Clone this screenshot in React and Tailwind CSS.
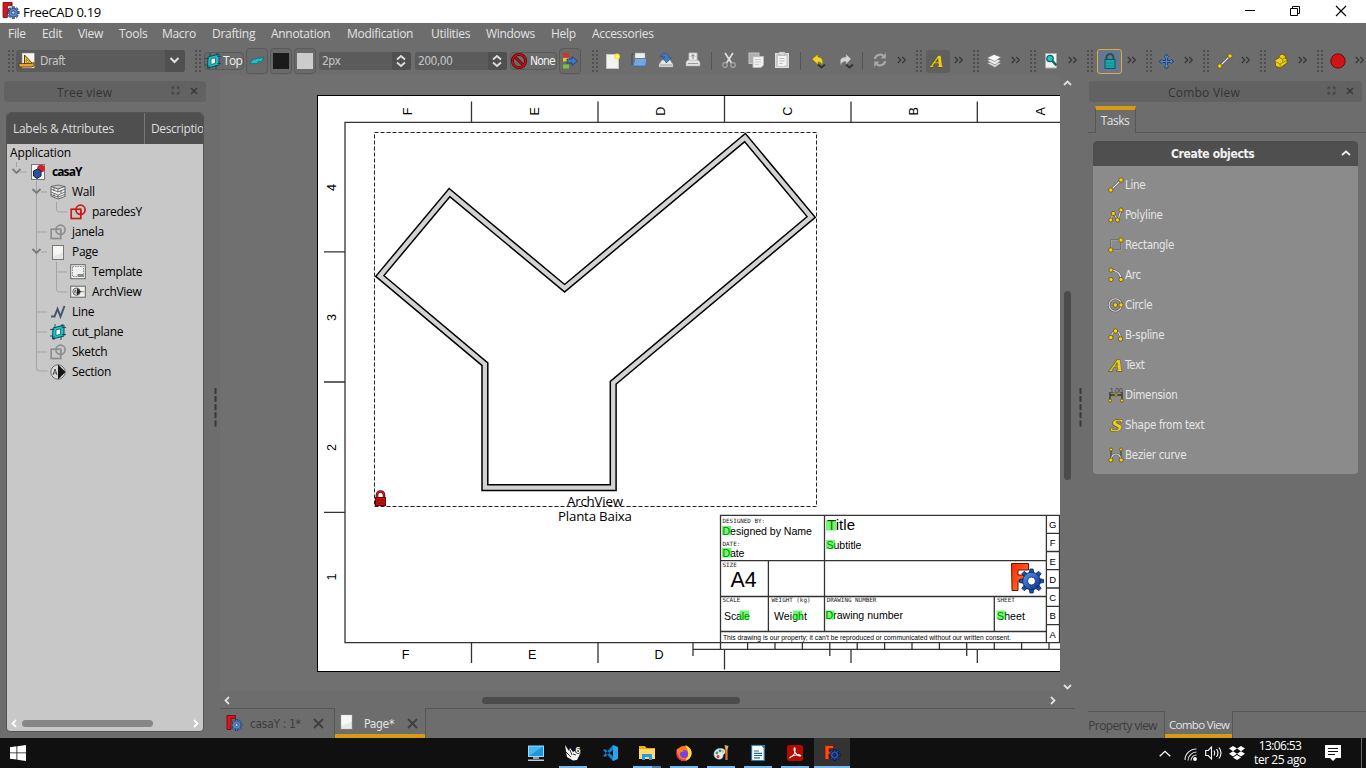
import React from "react";

const ui = "font-['Open_Sans','Noto_Sans',sans-serif]";
const tah = "font-['DejaVu_Sans_Condensed','DejaVu_Sans',sans-serif] [font-stretch:condensed]";

function Svg({ w = 16, h = 16, vb, className = "", children }) {
  return (
    <svg width={w} height={h} viewBox={vb || "0 0 16 16"} className={"block shrink-0 overflow-visible " + className} fill="none">
      {children}
    </svg>
  );
}

const teeth = [0, 45, 90, 135, 180, 225, 270, 315];

function Logo({ size = 16, dark = false, className = "" }) {
  const outline = dark ? "#07113a" : "#1d3c6e";
  return (
    <Svg w={size} h={size} vb="0 0 32 32" className={className}>
      <path d="M2 1h17v6H10v6h7v6h-7v10H2z" fill={dark ? "#ff4a12" : "#dd1518"} stroke={dark ? "#7a1500" : "#6d0708"} strokeWidth="1.6" />
      <g fill={dark ? "#2456b8" : "#5183c4"} stroke={outline} strokeWidth="1.4">
        {teeth.map((a) => (
          <rect key={a} x="18.9" y="9" width="4.600" height="6" transform={`rotate(${a} 21.200 20)`} />
        ))}
        <circle cx="21.200" cy="20" r="7.500" />
      </g>
      <circle cx="21.200" cy="20" r="7" fill={dark ? "#2456b8" : "#5a8acb"} />
      <circle cx="21.200" cy="20" r="3.200" fill={dark ? "#333" : "#c5d3e6"} stroke={outline} strokeWidth="1.4" />
    </Svg>
  );
}

function Dot({ x, y, r = 2 }) {
  return <circle cx={x} cy={y} r={r} fill="#f3d01c" stroke="#665500" strokeWidth="0.8" />;
}

function Plane() {
  return (
    <Svg>
      <path d="M3 4 14 1v11L2.500 15z" fill="#20bfc4" stroke="#0b4d55" />
      <path d="m6 6 4.500-1.200v5.500L6 11.500z" fill="#f2ffff" stroke="#0b5d64" strokeWidth=".8" />
      <path d="M0 5.500h4M0 12h3M12 3.500h4M12 10.500h4M5 0v4M12 0v3M4 12v4M11 12v4" stroke="#0b4d55" strokeWidth=".9" />
    </Svg>
  );
}

function PageIcon({ w = 12, h = 15 }) {
  return (
    <Svg w={w} h={h} vb="0 0 12 15">
      <rect x=".5" y=".5" width="11" height="14" fill="#e6e8e3" stroke="#777a75" />
      <path d="M1.200 1.200h9.600v6l-9.600 4z" fill="#f7f7f5" />
    </Svg>
  );
}

function Sketch({ color }) {
  return (
    <Svg>
      <rect x="1.200" y="5.200" width="9.600" height="9.300" stroke={color} strokeWidth="1.700" />
      <circle cx="10.500" cy="5.800" r="4.600" stroke={color} strokeWidth="1.700" />
      <path d="M6.500 5.500h4.500v4" stroke={color} strokeWidth="1" />
    </Svg>
  );
}

function LetterIcon({ ch, k = 1.15 }) {
  return (
    <Svg>
      <text transform={`translate(8 13.500) skewX(-6) scale(${k} 1)`} textAnchor="middle" fontFamily="Liberation Serif, serif" fontStyle="italic" fontWeight="bold" fontSize="17" fill="#ecd024" stroke="#5b4f08" strokeWidth=".9" paintOrder="stroke">{ch}</text>
    </Svg>
  );
}

function LineIcon() {
  return (
    <Svg>
      <path d="M3 13 13 3" stroke="#444" strokeWidth="2.400" />
      <path d="M3 13 13 3" stroke="#eee" strokeWidth="1.200" />
      <Dot x={2.800} y={13} r={2.200} /><Dot x={13} y={3} r={2.200} />
    </Svg>
  );
}

function Handle({ className }) {
  return (
    <Svg w={6} h={22} vb="0 0 6 22" className={className}>
      <path d="M1 0v22M5 0v22" stroke="#505050" strokeWidth="2" strokeDasharray="2 2" />
    </Svg>
  );
}

function More({ className = "ml-1" }) {
  return (
    <Svg w={9} h={8} vb="0 0 9 8" className={"mb-[2px] " + className}>
      <path d="m.8 1 3 3-3 3M5.300 1l3 3-3 3" stroke="#353535" strokeWidth="1.200" />
    </Svg>
  );
}

function Sep({ className }) {
  return <div className={"h-[18px] w-px shrink-0 bg-[#555] " + className} />;
}

function Btn({ className = "", children }) {
  return (
    <div className={"flex h-[26px] w-[22px] shrink-0 items-center justify-center rounded-[4px] border border-[#595959] bg-[#6a6a6a] " + className}>
      {children}
    </div>
  );
}

function Spin({ value, className }) {
  return (
    <div className={"flex h-[18px] w-[92px] shrink-0 items-center overflow-hidden rounded-[3px] bg-[#5b5b5b] " + className}>
      <span className={"w-[73px] pl-[3px] text-[12px] leading-[18px] tracking-[-0.6px] text-[#c6c6c6] " + tah}>{value}</span>
      <span className="flex h-full w-[19px] items-center justify-center bg-[#505050]">
        <Svg w={10} h={12} vb="0 0 10 12" className="-ml-px"><path d="m1 4.500 4-3.500 4 3.500M1 7.500l4 3.500 4-3.500" stroke="#ddd" strokeWidth="1.800" /></Svg>
      </span>
    </div>
  );
}

function TitleBar() {
  return (
    <div className="flex h-[23px] items-center bg-white">
      <Logo size={17} className="ml-[2px] mb-[2px]" />
      <span className={"ml-[4px] w-[1221px] text-[13px] leading-[22px] tracking-[-0.3px] text-black " + ui}>FreeCAD 0.19</span>
      <Svg w={12} h={12} vb="0 0 12 12" className="mb-[3px]"><path d="M1 6.500h10" stroke="#000" /></Svg>
      <Svg w={12} h={12} vb="0 0 12 12" className="mb-[2px] ml-[33px]"><path d="M1.500 3.500h7v7h-7zM3.500 3V1.500h7v7H9" stroke="#000" /></Svg>
      <Svg w={12} h={12} vb="0 0 12 12" className="mb-[2px] ml-[34px]"><path d="m1 1 10 10M11 1 1 11" stroke="#000" strokeWidth="1.100" /></Svg>
    </div>
  );
}

const menus = [
  ["File", "w-[34px]"], ["Edit", "w-[36px]"], ["View", "w-[41px]"], ["Tools", "w-[43px]"],
  ["Macro", "w-[50px]"], ["Drafting", "w-[59px]"], ["Annotation", "w-[76px]"], ["Modification", "w-[84px]"],
  ["Utilities", "w-[55px]"], ["Windows", "w-[65px]"], ["Help", "w-[41px]"], ["Accessories", "w-[80px]"],
];

function MenuBar() {
  return (
    <div className={"flex h-[22px] items-center pl-[8px] text-[12px] tracking-[-0.3px] text-[#e2e2e2] " + ui}>
      {menus.map(([m, w]) => <span key={m} className={"shrink-0 whitespace-nowrap " + w}>{m}</span>)}
    </div>
  );
}

function Slot({ w = "w-[24px]", className = "", children }) {
  return <div className={"ml-1 flex shrink-0 items-center justify-center " + w + " " + className}>{children}</div>;
}

const movePath = "M8 1v14M1 8h14M6 3 8 1l2 2M6 13l2 2 2-2M3 6 1 8l2 2M13 6l2 2-2 2";

function ToolBar() {
  return (
    <div className="flex h-[30px] items-center overflow-hidden pt-[2px]">
      <Handle className="ml-[8px]" />
      <div className="ml-[2px] flex h-[22px] w-[169px] shrink-0 items-center overflow-hidden rounded-[3px] bg-[#5b5b5b]">
        <Svg className="ml-[3px]">
          <rect x="3" y="0" width="12.500" height="15" fill="#f5f5f2" stroke="#888" strokeWidth=".6" />
          <path d="M5.500 2v9h8.500z" fill="#e7c51b" stroke="#544600" /><path d="M7.500 6.500v2.700h2.700z" fill="#fff" stroke="#544600" strokeWidth=".5" />
          <path d="M0 10.500h12l3-1v3.500l-3 1H0z" fill="#e9a03a" stroke="#5d3500" strokeWidth=".8" />
        </Svg>
        <span className={"ml-[5px] w-[125px] text-[12px] tracking-[-0.4px] text-[#c6c6c6] " + tah}>Draft</span>
        <span className="flex h-full flex-1 items-center justify-center bg-[#505050]">
          <Svg w={11} h={7} vb="0 0 11 7" className="-ml-[2px] -mt-[2px]"><path d="m1.500 1 4 4 4-4" stroke="#e2e2e2" strokeWidth="2" /></Svg>
        </span>
      </div>
      <Handle className="ml-[10px]" />
      <div className="ml-[3px] flex h-[18px] w-[40px] shrink-0 items-center rounded-[4px] border border-[#595959] bg-[#6a6a6a]">
        <Plane /><span className={"ml-[2px] text-[12px] tracking-[-0.700px] text-[#f0f0f0] " + ui}>Top</span>
      </div>
      <Btn className="ml-[2px]"><Svg><path d="M1 10.500c2-3.500 3-4.500 6-4.500l1-1 3 .3L15 4l-2 4.500-2 .5-1-1-2 2.500c-2 0-4 .5-7 0z" fill="#20bfc4" stroke="#0c6c72" strokeWidth=".8" /></Svg></Btn>
      <Btn className="ml-[2px]"><div className="h-4 w-4 bg-[#1a1a1a]" /></Btn>
      <Btn className="ml-[2px]"><div className="h-4 w-4 bg-[#ccc]" /></Btn>
      <Spin value="2px" className="ml-[3px]" />
      <Spin value="200,00" className="ml-[4px]" />
      <div className="ml-[3px] flex h-[18px] w-[47px] shrink-0 items-center rounded-[4px] border border-[#595959] bg-[#6a6a6a]">
        <Svg><circle cx="8" cy="8" r="6.600" stroke="#4a0000" strokeWidth="2.800" /><path d="m4 4 8 8" stroke="#4a0000" strokeWidth="2.800" /><circle cx="8" cy="8" r="6.600" stroke="#c40f0f" strokeWidth="1.600" /><path d="m4 4 8 8" stroke="#c40f0f" strokeWidth="1.600" /></Svg>
        <span className={"ml-[3px] text-[12px] tracking-[-0.800px] text-[#f0f0f0] " + tah}>None</span>
      </div>
      <Btn className="ml-[2px]">
        <Svg><rect x="1" y="0" width="6" height="4" fill="#e02c22" /><rect x="1" y="5" width="6" height="3.500" fill="#e8c81d" /><rect x="1" y="11.500" width="6" height="4" fill="#79c43c" /><path d="M5 6h5V3.500L15.500 8 10 12.500V10H5z" fill="#3f78bf" stroke="#183c6c" strokeWidth=".8" /></Svg>
      </Btn>
      <Handle className="ml-[11px]" />
      <Svg className="ml-[7px]"><rect x="1.500" y="1.500" width="12" height="14" fill="#f2f2f0" stroke="#c5c5c2" /><circle cx="12" cy="3.500" r="2.900" fill="#f6ec2c" /><circle cx="12" cy="3.500" r="1.300" fill="#fffdb0" /></Svg>
      <Svg className="-mt-[2px] ml-[10px]"><path d="M1 13V2h5l1 1.500h6V7" fill="#6f7275" stroke="#484b4e" /><path d="M4 1h10v8H4z" fill="#eee" stroke="#aaa" strokeWidth=".6" /><path d="M4 6.500h12l-1.500 7.500H2z" fill="#76a7dc" stroke="#3e6ea8" strokeWidth=".8" /></Svg>
      <Svg className="-mt-[2px] ml-[11px]"><path d="M4 8h8l3 4.500V15H1v-2.500z" fill="#e6e6e6" stroke="#999" strokeWidth=".6" /><path d="M2 13h12" stroke="#999" /><path d="M2 5C3 2 5 1 8 1.500c2 .5 2.500 2 2.500 4H13L8.500 11 4.500 5.500H7C7 4 5 3.500 2 5z" fill="#3f7cc8" stroke="#224d87" strokeWidth=".6" /></Svg>
      <Svg className="-mt-[2px] ml-[11px]"><path d="M4 1h8v8H4z" fill="#eee" stroke="#bbb" /><path d="M8 3v4M6 4.500 8 2.500l2 2" stroke="#777" /><path d="M3 8h10l2 2v4H1v-4z" fill="#e2e2e2" stroke="#aaa" strokeWidth=".6" /><path d="M3 11.500h10" stroke="#999" /></Svg>
      <Sep className="ml-[10px]" />
      <Svg className="-mt-[2px] ml-[9px]"><path d="m4 1 6.500 10M12 1 5.500 11" stroke="#ddd" strokeWidth="1.700" /><circle cx="4" cy="13" r="2.300" stroke="#a7a7a7" strokeWidth="1.200" /><circle cx="12" cy="13" r="2.300" stroke="#a7a7a7" strokeWidth="1.200" /></Svg>
      <Svg className="-mt-[2px] ml-[11px]"><rect x="1" y="1" width="10" height="10.500" fill="#aeaeae" stroke="#c5c5c5" /><path d="M5 4.500h10.500V13l-2.500 2.500H5z" fill="#f0f0ee" stroke="#bbb" /><path d="M7 7.500h6M7 10h6M7 12.500h4" stroke="#ccc" /></Svg>
      <Svg className="-mt-[2px] ml-[10px]"><rect x="1.500" y="1.500" width="13" height="14" fill="#c8c8c5" stroke="#ddd" /><path d="M4 4h8.500v9l-2 1H4z" fill="#f3f3f1" /><rect x="5" y="0" width="6" height="3" fill="#ddd" stroke="#999" strokeWidth=".5" /><path d="M5.500 6.500h5M5.500 9h5M5.500 11.500h3" stroke="#bbb" /></Svg>
      <Sep className="ml-[10px]" />
      <Svg className="ml-[10px]"><path d="m1 6 6-5v3c4 0 6 3.500 4 9-.5-3-1.500-4-4-4v3z" fill="#f0d42a" stroke="#857000" strokeWidth=".7" /><path d="m7 11.500 3.500 3 3.500-3" stroke="#333" strokeWidth="1.900" /></Svg>
      <Svg className="ml-[11px]"><path d="M13 6 8 1v3C3 4 1 7 3 12c.5-2.500 2-3.500 5-3.500v3z" fill="#d4d4d4" stroke="#888" strokeWidth=".7" /><path d="m8 11.500 3.500 3 3.500-3" stroke="#333" strokeWidth="1.900" /></Svg>
      <Sep className="ml-[8px]" />
      <Svg className="-mt-[2px] ml-[9px]"><path d="M3 7c0-4 6-6 9-2.500M13 9c0 4-6 6-9 2.500" stroke="#a8a8a8" strokeWidth="2.200" /><path d="M13.800 1v5.500H8.500zM2.200 15V9.500h5.300z" fill="#a8a8a8" /></Svg>
      <More className="ml-[9px]" />
      <Handle className="ml-[10px]" />
      <Slot className="h-[23px] rounded-[3px] bg-[#5f5f5f] pr-[2px]"><LetterIcon ch="A" /></Slot>
      <More />
      <Handle className="ml-[10px]" />
      <Slot className="pr-[2px]"><Svg w={14} h={14}><path d="m0 10.500 8-3 8 3-7 5z" fill="#ddd" stroke="#777" strokeWidth=".8" /><path d="m0 7.500 8-3 8 3-7 5z" fill="#eee" stroke="#777" strokeWidth=".8" /><path d="m0 4.500 8-4 8 3-7 5z" fill="#fff" stroke="#777" strokeWidth=".8" /></Svg></Slot>
      <More />
      <Handle className="ml-[10px]" />
      <Slot className="pr-[2px]"><Svg><path d="M2.500 .500h11v14.500h-11z" fill="#f2f2f0" stroke="#aaa" /><circle cx="7" cy="5.500" r="3.200" fill="#25c5c8" stroke="#0f666c" strokeWidth="1.300" /><path d="m9.500 8 4 4.500" stroke="#0f666c" strokeWidth="2.600" /></Svg></Slot>
      <More />
      <Handle className="ml-[10px]" />
      <Slot w="w-[25px]" className="h-[25px] rounded-[3px] border border-[#e0aa3e] bg-[#69778f]"><Svg><path d="M4.500 8V4.500a3.500 3.500 0 0 1 7 0V8" stroke="#16575d" strokeWidth="2" /><rect x="3" y="6.500" width="10" height="9" fill="#18a9ac" stroke="#0e5459" /><path d="M4 10h8M4 13h8" stroke="#118588" strokeWidth=".8" /></Svg></Slot>
      <More className="ml-[5px]" />
      <Handle className="ml-[10px]" />
      <Slot className="pr-[3px]"><Svg w={13} h={13}><path d={movePath} stroke="#1d3f70" strokeWidth="3.400" /><path d={movePath} stroke="#5287c6" strokeWidth="1.500" /></Svg></Slot>
      <More />
      <Handle className="ml-[10px]" />
      <Slot className="pr-[1px]"><LineIcon /></Slot>
      <More />
      <Handle className="ml-[10px]" />
      <Slot className="pr-[3px]"><Svg w={14} h={14}><path d="m1 7 5-3V2l3-2 4 2v3l2 1v4L7 16l-5-2z" fill="#ecd018" stroke="#675700" /><path d="m2 9 5 2.500L15 7M7 11.500V15M6 4l4 2 4-3M10 6v3" stroke="#847000" strokeWidth=".9" /></Svg></Slot>
      <More />
      <Handle className="ml-[10px]" />
      <Slot className="pr-[2px]"><Svg><circle cx="8" cy="8" r="7.200" fill="#d01414" stroke="#5d0808" strokeWidth=".9" /></Svg></Slot>
      <More />
    </div>
  );
}

function DockTitle({ title, className, pad }) {
  return (
    <div className={"flex h-[21px] shrink-0 items-center rounded-[3px] bg-[#626262] " + className}>
      <span className={"whitespace-nowrap pt-px text-[12px] leading-[21px] tracking-[0.22px] text-[#343434] " + pad + " " + ui}>{title}</span>
      <Svg w={9} h={9} vb="0 0 9 9" className="mb-[2px] ml-auto"><path d="M3.500 1H1v2.500M5.500 1H8v2.500M3.500 8H1V5.500M5.500 8H8V5.500M1 1l2 2M8 1 6 3M1 8l2-2M8 8 6 6" stroke="#3f3f3f" strokeWidth=".9" /></Svg>
      <Svg w={8} h={8} vb="0 0 8 8" className="mb-[2px] ml-[10px] mr-[8px]"><path d="m1 1 6 6M7 1 1 7" stroke="#3a3a3a" strokeWidth="1.700" /></Svg>
    </div>
  );
}

const tree = [
  { t: "Wall", p: "pl-[43px]", i: <Svg><path d="M1 2.500 8 5l7-2.500v10L8 15l-7-3z" fill="#f0f0f0" stroke="#555" strokeWidth=".9" /><path d="m1 5 7 3 7-3M1 8l7 3 7-3M1 10.500l7 2.500 7-2.500M4 4v3M11 6v3M4 9.500v3M8 5v3M8 11v3M1 2.500 8 1l7 1.500" stroke="#555" strokeWidth=".8" /></Svg> },
  { t: "paredesY", p: "pl-[63px]", i: <Sketch color="#cc1818" /> },
  { t: "janela", p: "pl-[43px]", i: <Sketch color="#8e8e8e" /> },
  { t: "Page", p: "pl-[43px]", i: <div className="flex w-4 justify-center"><PageIcon /></div> },
  { t: "Template", p: "pl-[63px]", i: <Svg><rect x=".7" y=".7" width="14.600" height="14" fill="#f1f1ee" stroke="#666" /><path d="M2.500 2.500h11v10h-11z" stroke="#8b8b8b" strokeDasharray="1.500 1" /><path d="M7.500 10h6v3h-6z" fill="#888" /></Svg> },
  { t: "ArchView", p: "pl-[63px]", i: <Svg><rect x=".7" y="2.200" width="14.600" height="11" fill="#f1f1ee" stroke="#666" /><circle cx="6.500" cy="7.700" r="3.700" fill="#ccc" stroke="#555" strokeWidth=".8" /><path d="M7 4v7.500L11 7.700z" fill="#222" /><path d="m4 9.500 1.300-3.500 1.200 3.500M11 7.700h3" stroke="#666" strokeWidth=".8" /></Svg> },
  { t: "Line", p: "pl-[43px]", i: <Svg><path d="M1 12.500h3.500L7.500 5l3 7.500L14.500 2" stroke="#46566d" strokeWidth="2" /></Svg> },
  { t: "cut_plane", p: "pl-[43px]", i: <Plane /> },
  { t: "Sketch", p: "pl-[43px]", i: <Sketch color="#8e8e8e" /> },
  { t: "Section", p: "pl-[43px]", i: <Svg><circle cx="8" cy="8" r="7.200" fill="#d9d9d9" stroke="#555" strokeWidth=".8" /><path d="M8 .5v15L15.500 8z" fill="#151515" /><path d="m3 11 2-6 2 6M3.500 9h3" stroke="#444" strokeWidth=".9" /></Svg> },
];

function Splitter({ className = "" }) {
  return (
    <Svg w={3} h={39} vb="0 0 3 39" className={className}><path d="M1.500 0v39" stroke="#383838" strokeWidth="2" strokeDasharray="6 2.100" /></Svg>
  );
}

function LeftDock() {
  return (
    <div className="flex w-[220px] shrink-0">
      <div className="flex w-[206px] shrink-0 flex-col pt-[6px]">
        <DockTitle title="Tree view" className="ml-[4px]" pad="pl-[53px]" />
        <div className="ml-[6px] mt-[10px] flex h-[620px] w-[198px] flex-col overflow-hidden rounded-[4px] border border-[#535353] bg-[#c8c8c8]">
          <div className={"flex h-[31px] shrink-0 items-center bg-[#4f4f4f] text-[12px] tracking-[-0.28px] text-[#dcdcdc] " + ui}>
            <span className="w-[137px] shrink-0 whitespace-nowrap pl-[6px]">Labels &amp; Attributes</span>
            <span className="h-full w-px shrink-0 bg-[#777]" />
            <span className="whitespace-nowrap pl-[6px] tracking-[-0.4px]">Descriptio</span>
          </div>
          <div className={"relative flex flex-1 flex-col text-[12px] tracking-[-0.28px] text-black " + ui}>
            <svg width="196" height="260" viewBox="0 0 196 260" className="absolute left-0 top-0" fill="none">
              <path d="M9.500 18v5M13 28h7M29.500 37v187q0 3 3 3h8M34 48h6M30 88h10M34 108h6M49.500 58v7q0 3 3 3h8M49.500 118v27q0 3 3 3h8M50 128h10M30 168h10M30 188h10M30 208h10" stroke="#a3a3a3" />
              <path d="m5.500 25 4 4 4-4M25.500 45l4 4 4-4M25.500 105l4 4 4-4" stroke="#7b7b7b" strokeWidth="1.900" />
            </svg>
            <div className="flex h-[18px] items-center pl-[3px] tracking-[-0.15px]">Application</div>
            <div className="flex h-[20px] items-center pl-[23px] font-bold">
              <Svg><rect x="1.500" y=".500" width="13" height="15" fill="#f4f4f2" stroke="#777" /><circle cx="11" cy="4.500" r="3.800" fill="#d81f1f" /><path d="m3.500 7 4-2 3.500 2v5l-4 2.500L3.500 12z" fill="#27539c" stroke="#10254d" /></Svg>
              <span className="ml-[6px] tracking-[-0.9px]">casaY</span>
            </div>
            {tree.map((r) => (
              <div key={r.t} className={"flex h-[20px] shrink-0 items-center " + r.p}>{r.i}<span className="ml-[6px]">{r.t}</span></div>
            ))}
            <div className="mt-auto flex h-[16px] items-center">
              <Svg w={6} h={9} vb="0 0 6 9" className="ml-[4px]"><path d="M5 1 1.500 4.500 5 8" stroke="#fff" strokeWidth="1.800" /></Svg>
              <div className="ml-[5px] h-[7px] w-[131px] rounded-full bg-[#868686]" />
              <Svg w={6} h={9} vb="0 0 6 9" className="ml-[40px]"><path d="M1 1l3.500 3.500L1 8" stroke="#fff" strokeWidth="1.800" /></Svg>
            </div>
          </div>
        </div>
      </div>
      <Splitter className="ml-[8px] mt-[313px]" />
    </div>
  );
}

const rulerTicks = [720.5, 747.6, 775, 802.4, 829.8, 857.2, 884.6, 912, 939.4, 966.7, 994.3, 1021.6, 1049];
const sideCells = [["G", 528.3], ["F", 546.4], ["E", 564.6], ["D", 582.8], ["C", 601.2], ["B", 619.4], ["A", 637.7]];
const wall = "M379.800 276 449.500 192.600 564.600 288.200 745 137.600 811.200 217 613.200 382.800V487.700H484.900V364.200z";
const marks = [[722, 526, 9], [722, 548, 9.5], [826, 520.5, 10], [826, 540, 9], [739.5, 610.5, 9.5], [793, 610.5, 9.5], [825.5, 610.5, 9], [996.5, 610.5, 9]];

function Drawing() {
  return (
    <svg width="840" height="616" viewBox="220 75 840 616" className="block" fill="none">
      <rect x="317.500" y="95.500" width="800" height="576" fill="#fff" stroke="#000" />
      <g stroke="#333" strokeWidth="1.300">
        <path d="M1060 122.400H345V642.700H1060" />
        <path d="M471.500 101.500v21M598 101.500v21M724.500 96v26M851 101.500v21M977.300 101.500v21M471.500 643v20M598 643v20M724.500 650v19.500M851 649v14M977.300 649v14" />
        <path d="M324 251.800h21M324 382h21M324 512.300h21" />
        <path d="M693 649.400h367M693 643v13M829.800 649v7M966.700 649v7" />
        {rulerTicks.map((x) => <path key={x} d={`M${x} 643v6.500`} />)}
      </g>
      <g fontFamily="Liberation Sans, Arial, sans-serif" fontSize="12.600" fill="#000" textAnchor="middle">
        {[["F", 407.5], ["E", 534.5], ["D", 660.8], ["C", 787.5], ["B", 914], ["A", 1040.5]].map(([c, x]) => (
          <text key={c} transform={`translate(${x + 4} 111.300) rotate(-90)`}>{c}</text>
        ))}
        {[["4", 187.5], ["3", 317.5], ["2", 447.5], ["1", 577]].map(([c, y]) => (
          <text key={c} transform={`translate(335.500 ${y}) rotate(-90)`}>{c}</text>
        ))}
        <text x="405.500" y="659">F</text><text x="532.300" y="659">E</text><text x="659" y="659">D</text>
      </g>
      <path d="M374.500 132.500H816.500V506.500H374.500z" stroke="#222" strokeDasharray="4 2" />
      <path d={wall} stroke="#000" strokeWidth="7.300" strokeMiterlimit="6" />
      <path d={wall} stroke="#d3d3d3" strokeWidth="4.300" strokeMiterlimit="6" />
      <path d="M377 498v-3a3.500 3.500 0 0 1 7 0v3" stroke="#4d0505" strokeWidth="2.600" />
      <path d="M377 498v-3a3.500 3.500 0 0 1 7 0v3" stroke="#e41e1e" strokeWidth="1.200" />
      <rect x="375.500" y="497.500" width="10" height="8" fill="#c51111" stroke="#5c0606" /><path d="M376.500 500h8M376.500 503h8" stroke="#8c0b0b" />
      <g fontFamily="Open Sans, Noto Sans, sans-serif" fontSize="13.300" fill="#000">
        <text x="567" y="505.700" textLength="56">ArchView</text>
        <text x="558" y="520.700" textLength="74">Planta Baixa</text>
      </g>
      <g stroke="#333" strokeWidth="1.300">
        <path d="M720.500 643V515.400H1059.500V643M720.500 560.600H1046.400M720.500 596.500H1046.400M720.500 631.500H1046.400M824.500 515.400V631.500M768.400 560.600V631.500M994.300 596.500V631.500M1046.400 515.400V643M1046.400 533.400h13M1046.400 551.500h13M1046.400 569.700h13M1046.400 588h13M1046.400 606.400h13M1046.400 624.600h13" />
      </g>
      <g fontFamily="Liberation Sans, Arial, sans-serif" fill="#000" fontSize="10.600">
        <g textAnchor="middle" fontSize="9.500">{sideCells.map(([c, y]) => <text key={c} x="1052.600" y={y}>{c}</text>)}</g>
        <text x="722.500" y="535.300" textLength="89.500">Designed by Name</text>
        <text x="722.500" y="557" textLength="22">Date</text>
        <text x="827" y="530.300" fontSize="15" textLength="28">Title</text>
        <text x="826.500" y="549" textLength="35">Subtitle</text>
        <text x="730.500" y="587" fontSize="21.300" textLength="26">A4</text>
        <text x="724" y="619.500" textLength="26">Scale</text>
        <text x="774" y="619.500" textLength="33">Weight</text>
        <text x="825.500" y="619.300" textLength="77.500">Drawing number</text>
        <text x="997" y="619.500" textLength="28">Sheet</text>
        <text x="723" y="640" fontSize="6.500" textLength="288" lengthAdjust="spacingAndGlyphs">This drawing is our property; it can't be reproduced or communicated without our written consent.</text>
      </g>
      <g fontFamily="DejaVu Sans Mono, monospace" fill="#222" fontSize="5.900">
        <text x="722.500" y="522.700">DESIGNED BY:</text><text x="722.500" y="545.700">DATE:</text><text x="722.500" y="566.700">SIZE</text>
        <text x="722.500" y="602.200">SCALE</text><text x="771.500" y="602.200">WEIGHT (kg)</text><text x="826.700" y="602.200">DRAWING NUMBER</text><text x="997" y="602.200">SHEET</text>
      </g>
      {marks.map(([x, y, s]) => <rect key={x + "-" + y} x={x} y={y} width={s} height={s} fill="#00f000" fillOpacity=".55" />)}
      <defs>
        <linearGradient id="fg" x1="0" y1="0" x2="1" y2="1"><stop offset="0" stopColor="#ff2600" /><stop offset="1" stopColor="#ff8436" /></linearGradient>
        <linearGradient id="gg" x1="0" y1="0" x2="1" y2="1"><stop offset="0" stopColor="#5c9bea" /><stop offset="1" stopColor="#062a86" /></linearGradient>
      </defs>
      <path d="M1011.500 563.500h17v6.500h-10.500v5h7v6h-7v9.500h-6z" fill="url(#fg)" stroke="#641500" />
      <g fill="#1e50b0" stroke="#061f5e" strokeWidth=".8">
        {teeth.map((a) => <path key={a} d="M1029.300 573l.6-4h3.200l.6 4z" transform={`rotate(${a} 1031.500 581)`} />)}
        <circle cx="1031.500" cy="581" r="8.800" fill="url(#gg)" />
        <circle cx="1031.500" cy="581" r="4" fill="#fff" />
      </g>
    </svg>
  );
}

function Close() {
  return <Svg w={11} h={11} vb="0 0 11 11"><path d="m1 1 9 9M10 1 1 10" stroke="#3f3f3f" strokeWidth="1.800" /></Svg>;
}

function Center() {
  return (
    <div className="flex w-[855px] shrink-0 flex-col">
      <div className="flex h-[616px]">
        <div className="w-[840px] shrink-0 overflow-hidden bg-[#707070]"><Drawing /></div>
        <div className="flex w-[15px] flex-col items-center">
          <Svg w={9} h={6} vb="0 0 9 6" className="mt-[5px]"><path d="m1 5 3.500-3.500L8 5" stroke="#e0e0e0" strokeWidth="1.800" /></Svg>
          <div className="mt-[205px] h-[189px] w-[7px] rounded-full bg-[#4b4b4b]" />
          <Svg w={9} h={6} vb="0 0 9 6" className="mt-[204px]"><path d="m1 1 3.500 3.500L8 1" stroke="#e0e0e0" strokeWidth="1.800" /></Svg>
        </div>
      </div>
      <div className="flex h-[17px] items-center pt-[2px]">
        <Svg w={6} h={9} vb="0 0 6 9" className="ml-[4px]"><path d="M5 1 1.500 4.500 5 8" stroke="#e0e0e0" strokeWidth="1.800" /></Svg>
        <div className="ml-[252px] h-[7px] w-[258px] rounded-full bg-[#4b4b4b]" />
        <Svg w={6} h={9} vb="0 0 6 9" className="ml-[310px]"><path d="M1 1l3.500 3.500L1 8" stroke="#e0e0e0" strokeWidth="1.800" /></Svg>
      </div>
      <div className={"flex h-[30px] text-[12px] text-[#3c3c3c] " + tah}>
        <div className="flex w-[115px] items-center border-r border-t border-[#575757] pl-[6px]">
          <Logo className="mb-[2px]" /><span className="ml-[8px] w-[63px] tracking-[-0.350px]">casaY : 1*</span><Close />
        </div>
        <div className="flex w-[90px] items-center border-b-[4px] border-[#d99a11] pl-[5px] pt-[5px] text-[#e2e2e2]">
          <div className="mb-[3px]"><PageIcon w={13} h={16} /></div><span className="ml-[11px] w-[43px] tracking-[-0.300px]">Page*</span><Close />
        </div>
        <div className="flex-1 border-l border-t border-[#575757]" />
      </div>
    </div>
  );
}

const w2 = (d) => <><path d={d} stroke="#555" strokeWidth="2.200" /><path d={d} stroke="#ddd" strokeWidth="1.100" /></>;

const tasks = [
  ["Line", <LineIcon />],
  ["Polyline", <Svg>{w2("M3 13 5 6l5 7 3-10")}<Dot x={2.8} y={13} r={2.1} /><Dot x={5.300} y={6.500} r={2.1} /><Dot x={9.500} y={13} r={2.1} /><Dot x={13} y={3} r={2.1} /></Svg>],
  ["Rectangle", <Svg><rect x="3" y="3" width="10" height="10" stroke="#666" strokeWidth="1.300" /><rect x="3.500" y="3.500" width="10" height="10" stroke="#aaa" strokeWidth=".7" /><Dot x={2.800} y={13} r={2.200} /><Dot x={13} y={3} r={2.200} /></Svg>],
  ["Arc", <Svg>{w2("M3 3c6 0 10 4 10 10")}<Dot x={3} y={3} r={2.1} /><Dot x={3} y={12.500} r={2.1} /><Dot x={13} y={12.500} r={2.1} /></Svg>],
  ["Circle", <Svg><circle cx="7.300" cy="8" r="6.200" stroke="#555" strokeWidth="2.200" /><circle cx="7.300" cy="8" r="6.200" stroke="#ddd" strokeWidth="1.100" /><Dot x={7.300} y={8} r={2.200} /><Dot x={13} y={8} r={2.200} /></Svg>],
  ["B-spline", <Svg>{w2("M3 11c1-8 8-10 10 1")}<Dot x={2.800} y={10.500} r={2.200} /><Dot x={7.500} y={4} r={2.200} /><Dot x={12.500} y={12} r={2.200} /></Svg>],
  ["Text", <LetterIcon ch="A" />],
  ["Dimension", <Svg><path d="M2 5v9M14 5v9M2 8h12" stroke="#333" strokeWidth="1.300" /><text x="8" y="6" textAnchor="middle" fontFamily="Liberation Sans, sans-serif" fontSize="7" fill="#444">1.00</text><Dot x={2} y={13.500} r={1.500} /><Dot x={14} y={13.500} r={1.500} /><Dot x={8} y={8} r={1.300} /></Svg>],
  ["Shape from text", <LetterIcon ch="S" k={1.3} />],
  ["Bezier curve", <Svg><path d="M3 2v10M13 2v10" stroke="#333" />{w2("M3 13C4 5 12 5 13 13")}<Dot x={3} y={2.500} r={1.500} /><Dot x={13} y={2.500} r={1.500} /><Dot x={2.800} y={13} r={2.1} /><Dot x={13.200} y={13} r={2.1} /></Svg>],
];

function RightDock() {
  return (
    <div className="flex w-[291px] shrink-0">
      <Splitter className="ml-[4px] mt-[313px]" />
      <div className="flex flex-1 flex-col pl-[6px]">
        <DockTitle title="Combo View" className="ml-[1px] mr-[4px] mt-[6px]" pad="pl-[79px]" />
        <div className="mt-[4px] flex h-[27px] shrink-0">
          <div className="w-[7px] border-b border-[#575757]" />
          <div className={"flex w-[41px] justify-center border-x border-t-[4px] border-x-[#575757] border-t-[#d99a11] pr-px pt-[2px] text-[12px] tracking-[-0.5px] text-[#e2e2e2] " + ui}>Tasks</div>
          <div className="flex-1 border-b border-[#575757]" />
        </div>
        <div className="ml-[5px] mt-[8px] w-[265px] shrink-0 overflow-hidden rounded-[4px] bg-[#8b8b8b]">
          <div className={"flex h-[25px] items-center bg-[#4f4f4f] pl-[78px] text-[12px] font-bold tracking-[-0.350px] text-[#f2f2f2] " + tah}>
            <span className="w-[170px] pt-px">Create objects</span>
            <Svg w={10} h={6} vb="0 0 10 6" className="mb-[2px]"><path d="m1 5 4-3.500L9 5" stroke="#eee" strokeWidth="1.800" /></Svg>
          </div>
          <div className={"flex h-[308px] flex-col pl-[15px] pt-[4px] text-[11.500px] tracking-[-0.280px] text-[#e6e6e6] " + tah}>
            {tasks.map(([t, i]) => <div key={t} className="flex h-[30px] items-center">{i}<span className="ml-px pt-[2px]">{t}</span></div>)}
          </div>
        </div>
        <div className={"mt-auto flex h-[27px] shrink-0 text-[12px] text-[#3c3c3c] " + ui}>
          <div className="flex w-[77px] shrink-0 items-center justify-end whitespace-nowrap border-r border-t border-[#575757] pr-[7px] pt-px tracking-[-0.62px]">Property view</div>
          <div className="flex w-[67px] shrink-0 items-center whitespace-nowrap border-b-[4px] border-[#d99a11] pl-[4px] pt-[5px] text-[11.500px] tracking-[-0.65px] text-[#e2e2e2]">Combo View</div>
          <div className="flex-1 border-l border-t border-[#575757]" />
        </div>
      </div>
    </div>
  );
}

const apps = [
  [<Svg><rect x=".5" y="1" width="15" height="10.500" fill="#45b5f3" stroke="#9adafb" /><path d="M1 11 15 1.500V11z" fill="#1e97e2" /><path d="M5 13h6M0 15.300h16" stroke="#bfc9d0" strokeWidth="1.400" /></Svg>, ""],
  [<Svg><path d="M0 0l4 6 1-3 3 4 2-1 2 2 4-1-2 4-2 4-4 .5L2 12z" fill="#f6f6f6" /><path d="M1 7l5 5M5 5l2 5M8 9l3 1" stroke="#222" strokeWidth=".9" /><text x="10.500" y="7.500" fontFamily="Liberation Sans, sans-serif" fontWeight="bold" fontSize="9" fill="#fff" stroke="#101010" strokeWidth="1.500" paintOrder="stroke">6</text></Svg>, "on"],
  [<Svg><path d="m1 5 2-1 9 8-1 4zM1 11l2 1 9-8-1-4z" fill="#0d83d0" /><path d="m11 0 5 2v12l-5 2z" fill="#26a5ee" /></Svg>, ""],
  [<Svg><path d="M0 1h6l1.500 2H16v11H0z" fill="#f0aa16" /><path d="M0 4h16v10H0z" fill="#ffd96c" /><path d="M3 15V9h10v6h-3v-3H6v3z" fill="#2e9ae6" /></Svg>, "split"],
  [<Svg><circle cx="8" cy="8.500" r="7.500" fill="#ff7a1c" /><path d="M9 0c5 2 7 5 6.500 9-.5 4-4 7-8 7 5-2 7-8 1.500-16z" fill="#ffd93a" /><circle cx="8" cy="9" r="4" fill="#7b3fe4" /><path d="M1 4c2-1 6 0 7 3-3-1-5 1-4 4-3-1-4-4-3-7z" fill="#ff7a2a" /><path d="M1 9c1 5 5 7 9 6" stroke="#ee2b61" strokeWidth="1.500" /></Svg>, "on"],
  [<Svg><path d="M1 9c0-4 4-6 7.500-5.500C12 4 13 6 12 8c-1 1.500-2 1-2 3 0 3-3 3.500-5 3-3-.5-4-2.500-4-5z" fill="#dcecf5" stroke="#93b2c3" strokeWidth=".7" /><circle cx="4" cy="8" r="1.400" fill="#4c9d35" /><circle cx="7" cy="5.800" r="1.400" fill="#2b79cc" /><circle cx="9.800" cy="6.500" r="1.300" fill="#f1c11f" /><circle cx="5" cy="11.500" r="1.500" fill="#d4372c" /><path d="M13.500 4v11" stroke="#dc7823" strokeWidth="2.200" /><path d="m11.500 0 4 1-1 3.500h-2z" fill="#d9ae82" /></Svg>, "on"],
  [<Svg><path d="M1.500 0H11l3.500 3.500V16h-13z" fill="#fff" /><path d="M1.500 .3H11M1.700 0v16M1.500 15.600h13M14.200 3v13" stroke="#0d6ea8" /><path d="M11 0h4v4z" fill="#1687c5" /><path d="M4 6h5M4 8.300h8M4 10.500h8M4 12.800h6" stroke="#0d6ea8" strokeWidth="1.200" /></Svg>, "on"],
  [<Svg><rect width="16" height="16" rx="2.500" fill="#b30b00" /><path d="M3 12.500C7 11 8.500 7 8 3.500c-.5-1.500-1.500 0-.5 2.500 1 3 3 4.500 5.500 5 1.500 0 .5-1.500-2-1.200-3 .2-5.500 1-7 2-1.500 1.200-1.500 1.500-1 .7z" stroke="#fff" strokeWidth="1.100" /></Svg>, "on"],
];

function TaskBar() {
  return (
    <div className={"flex h-[30px] shrink-0 items-center bg-[#101010] " + ui}>
      <Svg className="ml-[10px]"><path d="M0 2.200 6.500 1.300v6.200H0zM7.300 1.200 16 0v7.500H7.300zM0 8.300h6.500v6.200L0 13.700zM7.300 8.300H16V16l-8.700-1.200z" fill="#fff" /></Svg>
      <div className="ml-[491px] flex h-full">
        {apps.map(([icon, s], i) => (
          <div key={i} className="flex h-full w-[37px] flex-col items-center justify-between pt-[7px]">
            {icon}
            {s === "" && <div className="h-[2px]" />}
            {s === "on" && <div className="h-[2px] w-[28px] bg-[#76b9ed]" />}
            {s === "split" && <div className="h-[2px] w-[28px] border-r-[9px] border-[#4f7fa6] bg-[#76b9ed]" />}
          </div>
        ))}
        <div className="ml-px flex h-full w-[36px] flex-col items-center justify-between bg-[#333] pt-[7px]"><Logo dark /><div className="h-[2px] w-full bg-[#76b9ed]" /></div>
      </div>
      <Svg w={12} h={7} vb="0 0 12 7" className="ml-[309px]"><path d="m.7 6.300 5.300-5 5.300 5" stroke="#fff" strokeWidth="1.300" /></Svg>
      <Svg w={13} h={13} vb="0 0 13 13" className="ml-[13px] mt-[2px]"><path d="M1 12C1 6 6 1 12.500 1M4 12.500C4 8 8 4 12.500 4M7 12.500C7 9.500 9.500 7 12.500 7" stroke="#ddd" strokeWidth="1.100" /><circle cx="11" cy="11" r="1.900" fill="#fff" /></Svg>
      <Svg w={17} h={14} vb="0 0 17 14" className="ml-[8px]"><path d="M.7 4.500h2.500L6.500 1.200v11.600L3.200 9.500H.7zM9 4.500q1.500 2.500 0 5M11.500 3q3 4 0 8M14 1.500q4 5.500 0 11" stroke="#fff" strokeWidth="1.100" /></Svg>
      <Svg w={16} h={14} vb="0 0 16 14" className="ml-[7px]"><path d="m4 0 4 2.600L4 5.200 0 2.600zM12 0l4 2.600-4 2.600-4-2.600zM4 5.200l4 2.600-4 2.600L0 7.800zM12 5.200l4 2.600-4 2.600-4-2.600zM8 9l4 2.500L8 14l-4-2.500z" fill="#fff" /></Svg>
      <div className="ml-[6px] flex w-[58px] flex-col items-center whitespace-nowrap text-[12px] leading-[14.500px] tracking-[-0.6px] text-white"><span>13:06:53</span><span className="tracking-[-0.45px]">ter 25 ago</span></div>
      <Svg className="ml-[16px]"><path d="M0 0h16v13h-5l-3 3-3-3H0z" fill="#fff" /><path d="M3 3.500h10M3 6.500h10M3 9.500h7" stroke="#101010" /></Svg>
      <div className="ml-[20px] h-full w-px bg-[#666]" />
    </div>
  );
}

export default function App() {
  return (
    <div className="flex h-[768px] w-[1366px] flex-col overflow-hidden bg-[#6d6d6d]">
      <TitleBar />
      <MenuBar />
      <ToolBar />
      <div className="flex h-[663px] shrink-0">
        <LeftDock />
        <Center />
        <RightDock />
      </div>
      <TaskBar />
    </div>
  );
}
